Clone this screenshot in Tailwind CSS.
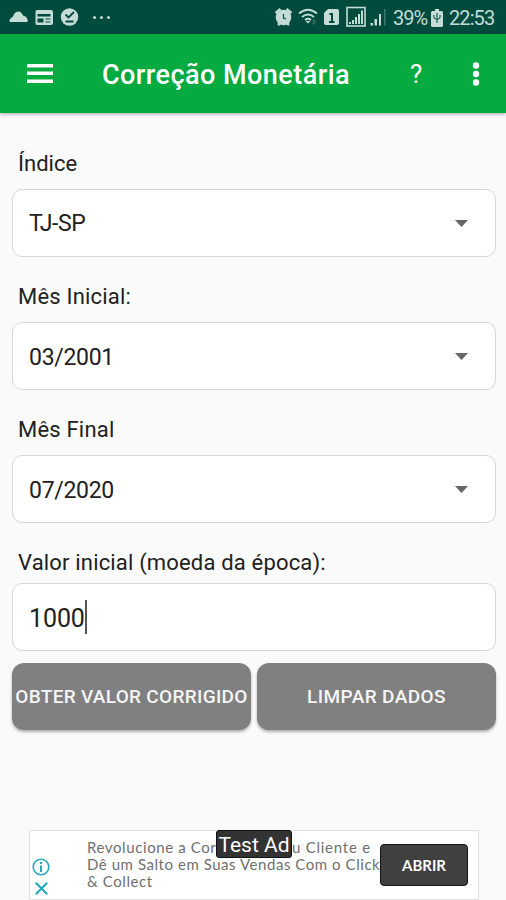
<!DOCTYPE html>
<html lang="pt-BR">
<head>
    <meta charset="UTF-8">
    <meta name="viewport" content="width=device-width, initial-scale=1.0">
    <title>Correção Monetária</title>
    <script src="https://cdn.jsdelivr.net/npm/@tailwindcss/browser@4"></script>
</head>
<body class="bg-[#fafafa] text-[#212121] font-['Roboto',sans-serif] w-[506px] h-[900px] flex flex-col overflow-hidden">

    <!-- Status bar -->
    <div class="h-[34px] shrink-0 bg-[#004b3e] text-[#c4dbd6] flex items-center justify-between">
        <svg class="w-[120px] h-[34px]" viewBox="0 0 120 34" fill="currentColor">
            <path d="M10.500 22q-1.500 0-1-1.800.7-2.500 3.300-3.500 1.500-4.800 5.400-5.300 3.300 0 4.700 4 3.800.8 4.900 4.600.4 2-1.200 2z"/>
            <path fill-rule="evenodd" d="M37 10h14q2 0 2 2v11q0 2-2 2H37q-1.500 0-1.500-2V12q0-2 1.500-2zm.5 4v2.500h13V14zm0 4.500v4h6v-4zm8 0v1h5v-1zm0 3v1h5v-1z"/>
            <circle cx="69.500" cy="17" r="8.700"/>
            <path d="M65.500 14.500l3 3 5.500-5.500M65.500 21.500h8" fill="none" stroke="#004b3e" stroke-width="1.800"/>
            <circle cx="94.500" cy="17.500" r="1.500"/>
            <circle cx="101.500" cy="17.500" r="1.500"/>
            <circle cx="108.500" cy="17.500" r="1.500"/>
        </svg>
        <div class="flex items-center pr-[11px]">
            <svg class="w-[120px] h-[34px]" viewBox="272 0 120 34" fill="currentColor">
                <!-- alarm -->
                <circle cx="283.500" cy="17.500" r="7.800"/>
                <path d="M275.500 13l5-4M286.500 9l5 4M278 25l3-3M289 25l-3-3" stroke="currentColor" stroke-width="2.500"/>
                <path d="M283.500 14V18l2.500 1" fill="none" stroke="#004b3e" stroke-width="1.200"/>
                <!-- wifi -->
                <path d="M299 13.500q9-7.500 18 0M302 17q6-5 12 0M305 20q3-2.500 6 0" fill="none" stroke="currentColor" stroke-width="1.800"/>
                <path d="M305.500 21h5L308 23.500z"/>
                <path d="M314 19l2 2.500h-4zM314 25l2-2.500h-4z" opacity=".3"/>
                <!-- sim -->
                <path d="M328 9h9q2 0 2 2v12q0 2-2 2h-11q-2 0-2-2V13z"/>
                <path d="M329.500 14h2.500v8M329 22h5.500" fill="none" stroke="#004b3e" stroke-width="2"/>
                <!-- signal -->
                <rect x="347" y="7.500" width="18" height="18.500" fill="none" stroke="currentColor" stroke-width="1.600"/>
                <path d="M349 22h2v2h-2zM352 20h2v4h-2zM355 17h2v7h-2zM358 14h2v10h-2zM361 10.500h2V24h-2z"/>
                <path d="M370.500 23h2.500v2.500h-2.500zM374.500 19h2.500v6.500h-2.500zM379 14h2v11.500h-2z"/>
                <path d="M384 9h1.500v16.500H384z" opacity=".3"/>
            </svg>
            <span class="w-[34px] text-[20px] leading-none tracking-[-1px] whitespace-nowrap mt-[2px] ml-[1px]">39%</span>
            <svg class="w-[12px] h-[18px] ml-[4px] mt-[1px]" viewBox="0 0 12 18" fill="currentColor">
                <path d="M4 0h4v2h2.500Q12 2 12 3.500v13q0 1.500-1.500 1.500h-9Q0 18 0 16.500v-13Q0 2 1.500 2H4z"/>
                <path d="M6 4v10M3 6v3q3 3 6 0V6" fill="none" stroke="#004b3e" stroke-width="1"/>
            </svg>
            <span class="w-[46px] text-[20px] leading-none tracking-[-0.9px] whitespace-nowrap mt-[2px] ml-[6px]">22:53</span>
        </div>
    </div>

    <!-- App bar -->
    <header class="relative h-[79px] shrink-0 bg-[#05ab40] text-white flex items-center shadow-[0_1px_4px_rgba(0,0,0,0.35)]">
        <svg class="w-[26px] h-[20px] ml-[27px]" viewBox="0 0 26 20" fill="currentColor">
            <path d="M0 0h26v3.500H0zM0 7.500h26V11H0zM0 15.500h26V19H0z"/>
        </svg>
        <h1 class="w-[308px] ml-[49px] pt-[3px] text-[27px] font-medium whitespace-nowrap tracking-[0.45px]">Correção Monetária</h1>
        <span class="w-[14px] text-[26px] pt-[2px]">?</span>
        <svg class="w-[8px] h-[24px] ml-[48px]" viewBox="0 0 8 24" fill="currentColor">
            <circle cx="4" cy="3.500" r="3.200"/>
            <circle cx="4" cy="12" r="3.200"/>
            <circle cx="4" cy="20.500" r="3.200"/>
        </svg>
    </header>

    <!-- Form -->
    <main class="pl-[12px] pr-[10px] pt-[38px] flex flex-col text-[22px]">
        <label class="h-[26px] leading-[26px] pl-[6px] mb-[12px]">Índice</label>
        <div class="h-[68px] bg-white border border-[#d8d8d8] rounded-[10px] pl-[16px] pr-[27px] flex items-center justify-between">
            <span class="text-[23px] tracking-[-0.4px] pt-[3px]">TJ-SP</span>
            <svg class="w-[13px] h-[7px]" viewBox="0 0 13 7" fill="#666"><path d="M0 0h13L6.500 7z"/></svg>
        </div>

        <label class="h-[26px] leading-[26px] pl-[6px] mt-[27px] mb-[12px] tracking-[0.2px]">Mês Inicial:</label>
        <div class="h-[68px] bg-white border border-[#d8d8d8] rounded-[10px] pl-[16px] pr-[27px] flex items-center justify-between">
            <span class="text-[23px] tracking-[-0.3px] pt-[4px]">03/2001</span>
            <svg class="w-[13px] h-[7px]" viewBox="0 0 13 7" fill="#666"><path d="M0 0h13L6.500 7z"/></svg>
        </div>

        <label class="h-[26px] leading-[26px] pl-[6px] mt-[27px] mb-[12px] tracking-[0.2px]">Mês Final</label>
        <div class="h-[68px] bg-white border border-[#d8d8d8] rounded-[10px] pl-[16px] pr-[27px] flex items-center justify-between">
            <span class="text-[23px] tracking-[-0.3px] pt-[4px]">07/2020</span>
            <svg class="w-[13px] h-[7px]" viewBox="0 0 13 7" fill="#666"><path d="M0 0h13L6.500 7z"/></svg>
        </div>

        <label class="h-[26px] leading-[26px] pl-[6px] mt-[27px] mb-[7px] tracking-[0.17px]">Valor inicial (moeda da época):</label>
        <div class="h-[68px] bg-white border border-[#d8d8d8] rounded-[10px] pl-[16px] flex items-center">
            <span class="text-[25px] tracking-[-0.1px] pt-[3px]">1000</span>
            <span class="w-[2px] h-[34px] bg-[#555]"></span>
        </div>

        <div class="flex gap-[6px] mt-[12px] text-[19px] font-medium text-[#f5f5f5]">
            <button class="w-[239px] h-[67px] pt-[2px] bg-[#808080] rounded-[12px] whitespace-nowrap tracking-[0.3px] flex items-center justify-center shadow-[0_2px_3px_rgba(0,0,0,0.3)]">OBTER VALOR CORRIGIDO</button>
            <button class="w-[239px] h-[67px] pt-[2px] bg-[#808080] rounded-[12px] whitespace-nowrap tracking-[0.4px] flex items-center justify-center shadow-[0_2px_3px_rgba(0,0,0,0.3)]">LIMPAR DADOS</button>
        </div>
    </main>

    <!-- Ad banner -->
    <div class="relative mt-auto ml-[29px] w-[450px] h-[70px] bg-white border border-[#e2e2e2] flex items-start">
        <div class="w-[18px] ml-[2px] mt-[27px] flex flex-col items-center gap-[6px]">
            <svg class="w-[18px] h-[18px]" viewBox="0 0 18 18" fill="none" stroke="#21a9bd" stroke-width="1.600">
                <circle cx="9" cy="9" r="7.800"/>
                <path d="M9 7.500V14M9 4v2" stroke-width="2"/>
            </svg>
            <svg class="w-[13px] h-[13px]" viewBox="0 0 13 13" stroke="#21a9bd" stroke-width="2"><path d="M.8.8l11.400 11.400M12.200.8L.8 12.200"/></svg>
        </div>
        <div class="ml-[37px] mt-[8px] w-[293px] whitespace-nowrap font-['Lato',sans-serif] text-[15px] leading-[17px] text-[#707070] tracking-[0.55px]">
            <p class="flex">
                <span class="w-[129px] tracking-[0.6px]">Revolucione a Cor</span>
                <span class="ml-[76px] tracking-[0.75px]">u Cliente e</span>
            </p>
            <p>Dê um Salto em Suas Vendas Com o Click</p>
            <p class="tracking-[0.6px]">&amp; Collect</p>
        </div>
        <button class="relative mt-[13px] w-[88px] h-[42px] bg-[#404040] border border-[#151515] rounded-[4px] text-white text-[15px] font-bold font-['Lato',sans-serif]">ABRIR</button>
        <span class="absolute left-[186px] top-[-1px] w-[76px] h-[28px] bg-[#333] border border-[#111] rounded-[3px] text-white text-[21px] leading-[29px] text-center whitespace-nowrap">Test Ad</span>
    </div>
</body>
</html>
